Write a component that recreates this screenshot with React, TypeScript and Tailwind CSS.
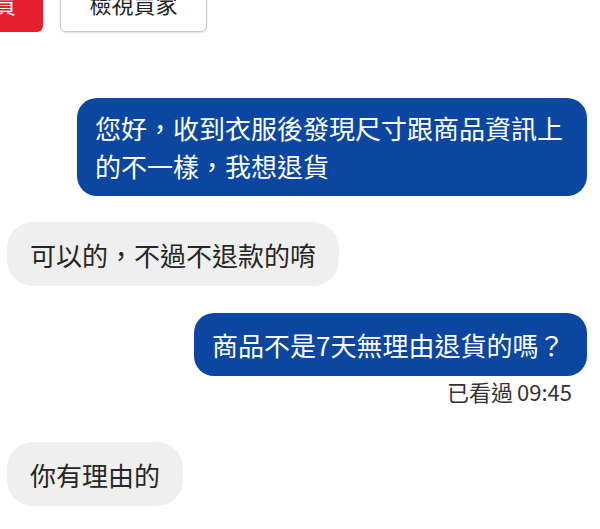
import React from 'react';

const font = { fontFamily: '"Noto Sans CJK TC", "Noto Sans", sans-serif' };

function Mine({ children, width }: { children: React.ReactNode; width: string }) {
  return <div className="flex justify-end pr-[13px]">
      <div className={`${width} rounded-[20px] bg-[#0b47a1] pl-[18px] pr-[14px] text-[26px] leading-[38px] text-white`}>
        {children}
      </div>
    </div>;
}

function Theirs({ children }: { children: React.ReactNode }) {
  return <div className="flex pl-[7px]">
      <div className="flex h-[64px] items-center rounded-[26px] bg-[#efefef] px-[23px] text-[26px] text-[#262626]">
        {children}
      </div>
    </div>;
}

export default function App() {
  return <div className="h-[529px] w-[600px] overflow-hidden bg-white" style={font}>
      <div className="-mt-[20px] flex h-[52px] items-stretch">
        <div className="w-[43px] overflow-hidden rounded-br-[6px] bg-[#e5202e]">
          <div className="-ml-[6px] mt-[12px] text-[22px] leading-[22px] text-white">買</div>
        </div>
        <div className="ml-[17px] flex w-[147px] items-center justify-center rounded-[6px] border border-[#c8c8c8] bg-white text-[22px] text-[#222] shadow-[0_1px_2px_rgba(0,0,0,0.12)]">
          <span className="-mt-[5px]">檢視買家</span>
        </div>
      </div>

      <div className="mt-[66px]">
        <Mine width="w-[510px] py-[11px]">
          您好，收到衣服後發現尺寸跟商品資訊上的不一樣，我想退貨
        </Mine>
      </div>

      <div className="mt-[26px]">
        <Theirs>可以的，不過不退款的唷</Theirs>
      </div>

      <div className="mt-[27px]">
        <Mine width="w-[393px] h-[63px] flex items-center">
          商品不是7天無理由退貨的嗎？
        </Mine>
      </div>

      <div className="mt-[1px] flex justify-end gap-[4px] pr-[28px] text-[22px] leading-[28px] text-[#333]">
        <span>已看過</span>
        <span>09:45</span>
      </div>

      <div className="mt-[37px]">
        <Theirs>你有理由的</Theirs>
      </div>
    </div>;
}
